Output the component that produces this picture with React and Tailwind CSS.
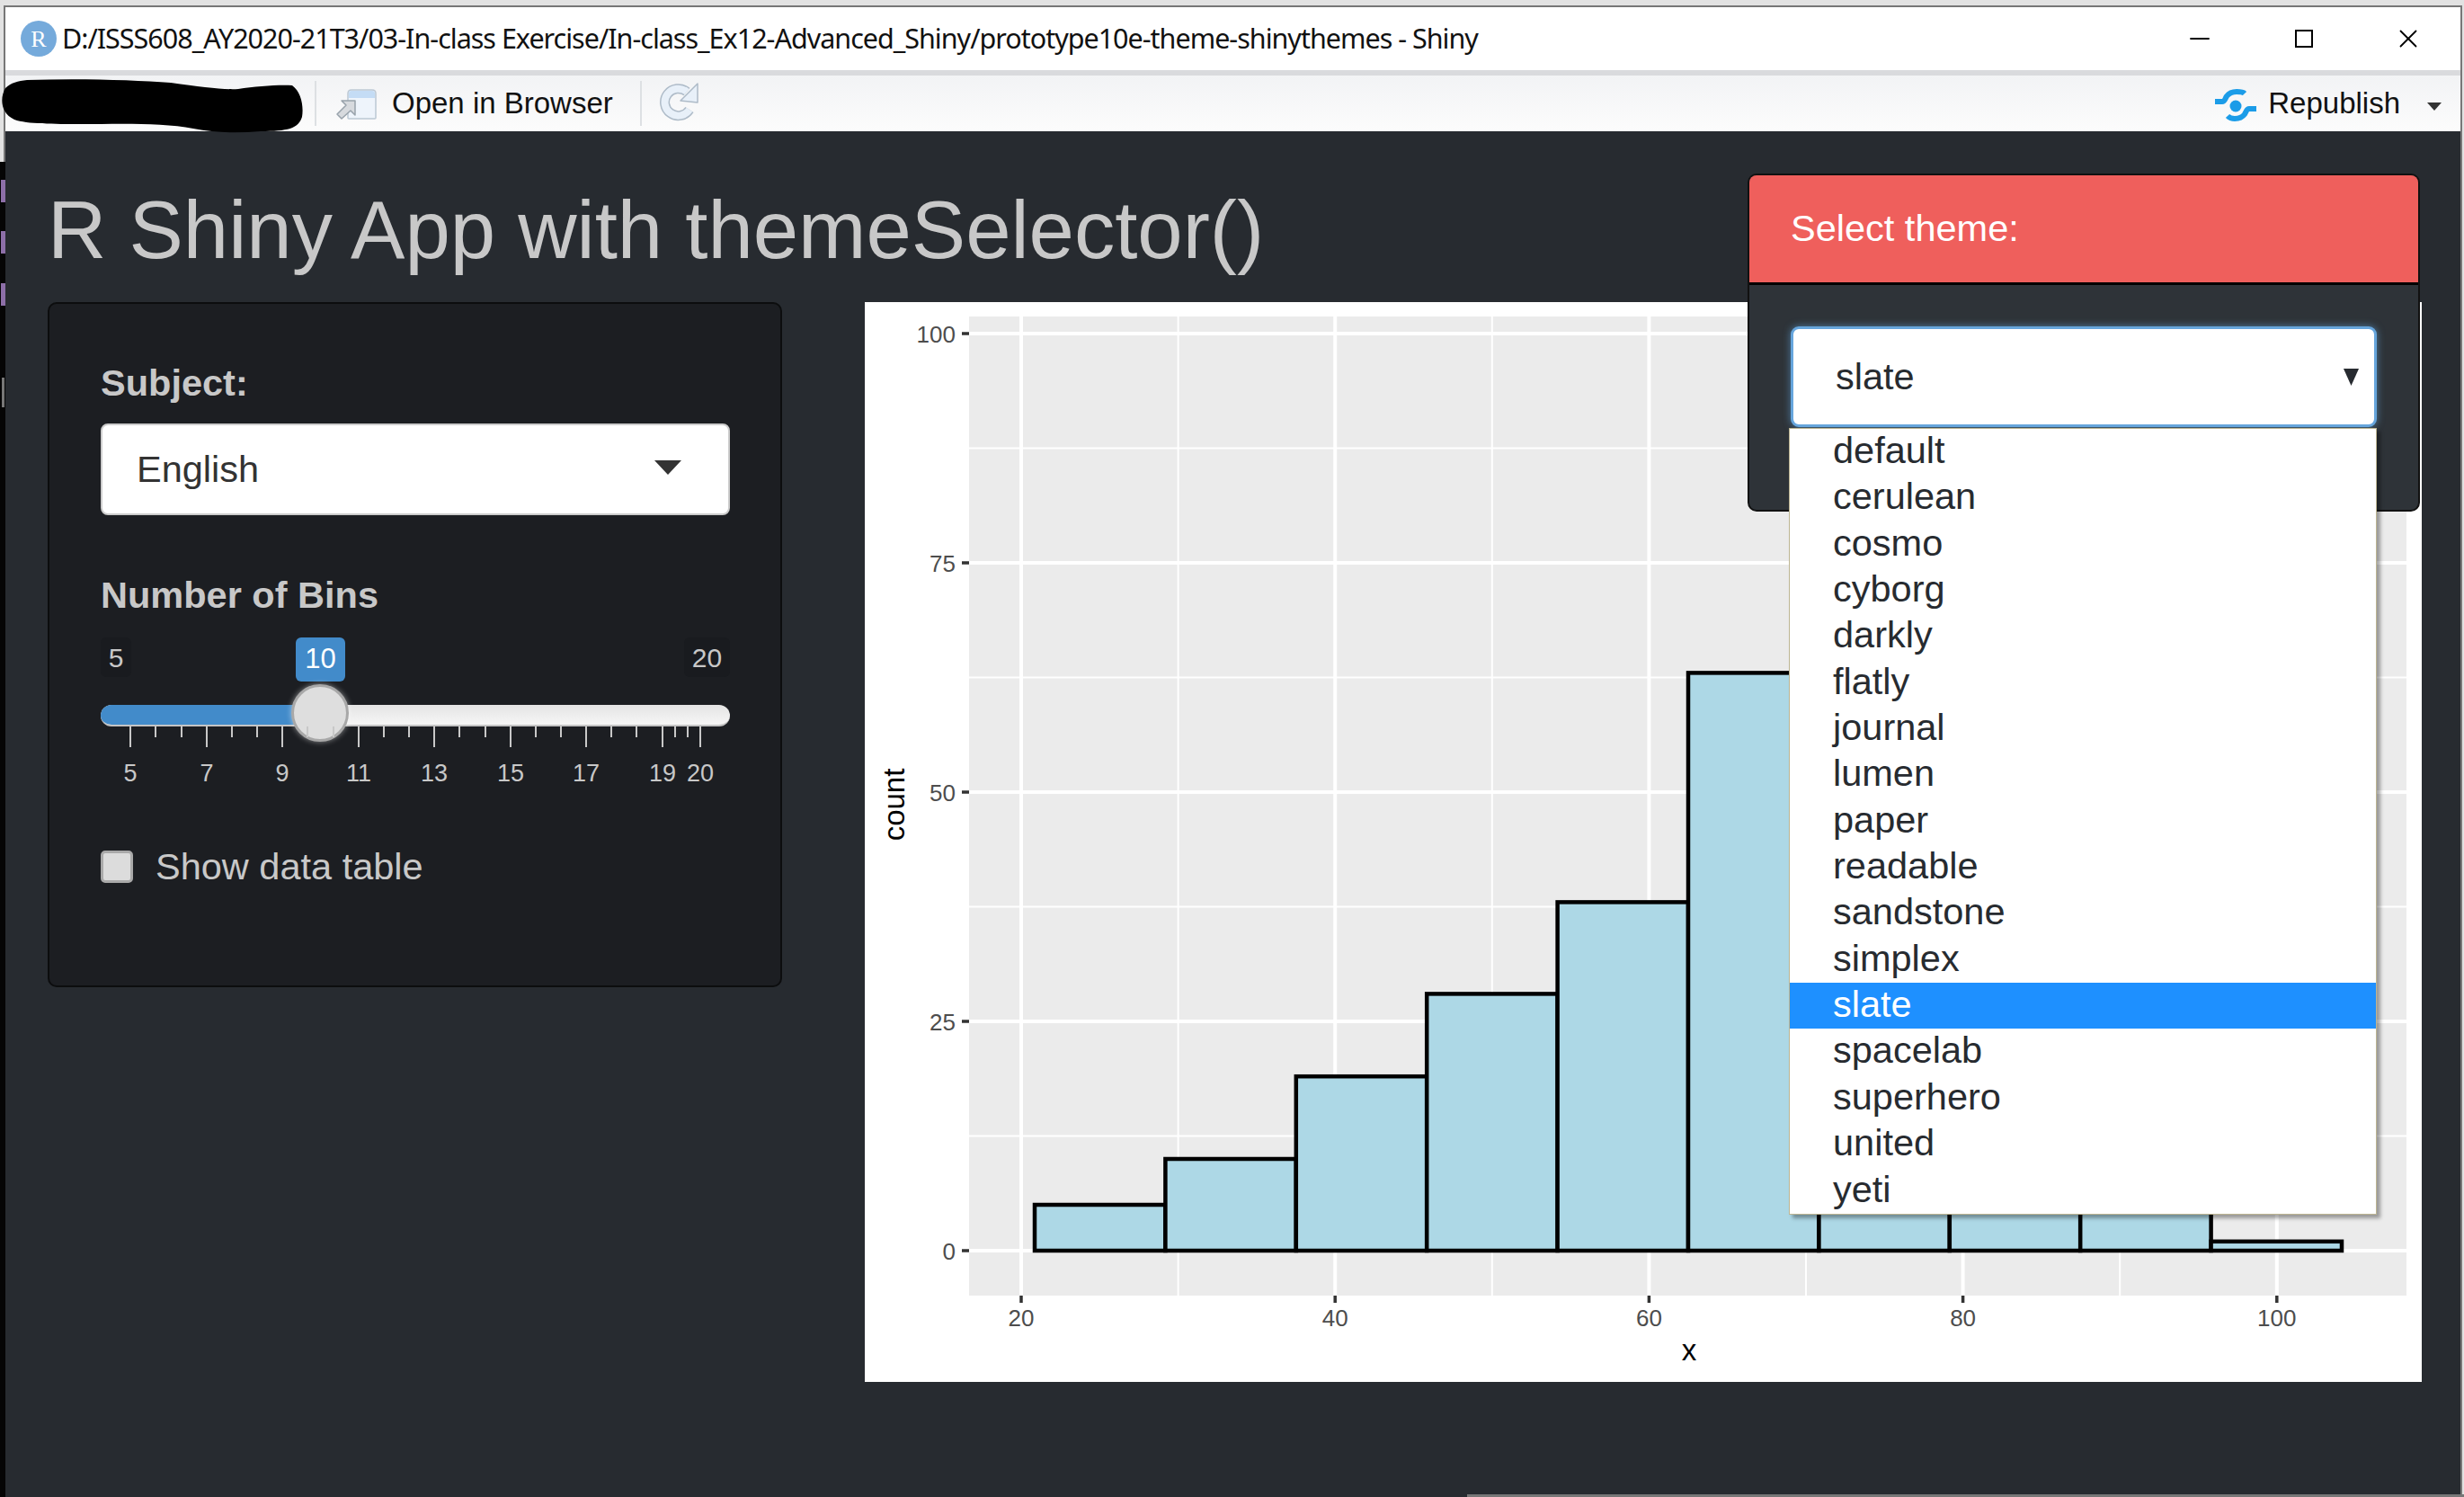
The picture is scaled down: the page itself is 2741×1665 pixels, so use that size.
import { Minus, X } from 'lucide-react';

const sans = 'font-["Liberation_Sans",Arial,sans-serif]';

const themes = ['default', 'cerulean', 'cosmo', 'cyborg', 'darkly', 'flatly', 'journal', 'lumen', 'paper', 'readable', 'sandstone', 'simplex', 'slate', 'spacelab', 'superhero', 'united', 'yeti'];
const bins = [5, 10, 19, 28, 38, 63, 80, 45, 25, 1];

const px = (v) => 174 + (v - 20) * 17.46;
const py = (c) => 1055 - c * 10.2;

const TitleBar = () => (
    <div className="flex items-center h-[70px] bg-white pl-[17px] pr-[41px]">
        <div className="w-[40px] h-[40px] rounded-full bg-[#75aadb] flex items-center justify-center text-white text-[26px] font-['Liberation_Serif',serif] shrink-0">R</div>
        <div className="ml-[6px] text-[30.5px] text-[#111] whitespace-nowrap font-['Noto_Sans',sans-serif] tracking-[-1px]">
            D:/ISSS608_AY2020-21T3/03-In-class Exercise/In-class_Ex12-Advanced_Shiny/prototype10e-theme-shinythemes - Shiny
        </div>
        <div className="ml-auto flex items-center gap-[82px]">
            <Minus size={34} strokeWidth={2} absoluteStrokeWidth className="text-black" />
            <div className="w-[34px] flex justify-center">
                <div className="w-[20px] h-[20px] border-2 border-black" />
            </div>
            <X size={34} strokeWidth={1.8} absoluteStrokeWidth className="text-black" />
        </div>
    </div>
);

const OpenIcon = () => (
    <svg width="62" height="62" viewBox="0 0 62 62">
        <path d="M27 20 Q27 16 31 16 H54 Q58 16 58 20 V47 Q58 48 57 48 H28 Q27 48 27 47 Z" fill="#eef4fb" stroke="#bcc8d4" strokeWidth="1.5" />
        <path d="M28 25 V20 Q28 17 31 17 H54 Q57 17 57 20 V25 Z" fill="#c4dcf5" />
        <path d="M35 28 V44 L30 39 L20 48 L15 43 L25 33 L20 28 Z" fill="#d7dade" stroke="#98a2ab" strokeWidth="1.5" strokeLinejoin="round" />
    </svg>
);

const RefreshIcon = () => (
    <svg width="62" height="62" viewBox="0 0 62 62" fill="none">
        <path d="M40 18 A15 15 0 1 0 43 38" stroke="#aebbc8" strokeWidth="11" />
        <path d="M40 18 A15 15 0 1 0 43 38" stroke="#e8f0f9" strokeWidth="8" />
        <path d="M52 9 V30 L33 28 Z" fill="#e8f0f9" stroke="#aebbc8" strokeWidth="1.5" strokeLinejoin="round" />
    </svg>
);

const PublishIcon = () => (
    <svg width="70" height="50" viewBox="0 0 70 50" fill="none">
        <circle cx="35" cy="28" r="6.5" fill="#1b9ce8" />
        <path d="M12 23 H20 C23 23 23 20 25 17 C28 13 33 12 36 12 C40 12 43 12 45 14" stroke="#1b9ce8" strokeWidth="6" />
        <path d="M58 31 H50 C47 31 47 34 45 37 C42 41 37 42 34 42 C30 42 28 41 26 39" stroke="#1b9ce8" strokeWidth="6" />
    </svg>
);

const Toolbar = () => (
    <div className={`relative flex items-center h-[62px] bg-gradient-to-b from-[#f2f3f5] to-[#fcfcfc] ${sans} text-[33px] text-[#111]`}>
        <svg className="absolute left-[-6px] top-[4px]" width="340" height="60" viewBox="0 0 340 60">
            <path d="M30 1 C90 -1 150 1 190 4 C225 9 250 12 265 11 C285 8 310 6 325 7 C335 14 338 30 336 42 C332 55 320 58 290 58 C265 60 240 60 215 55 C180 48 130 50 90 50 C60 50 30 50 16 45 C0 38 0 20 6 10 C12 4 20 2 30 1 Z" fill="#000" />
        </svg>
        <div className="w-[2px] h-[50px] bg-[#dde0e3] ml-[344px]" />
        <div className="ml-[8px]"><OpenIcon /></div>
        <span className="ml-[14px]">Open in Browser</span>
        <div className="w-[2px] h-[50px] bg-[#dde0e3] ml-[30px]" />
        <div className="ml-[10px]"><RefreshIcon /></div>
        <div className="ml-auto flex items-center pr-[21px]">
            <PublishIcon />
            <span className="ml-[1px]">Republish</span>
            <svg className="ml-[30px] mt-[6px]" width="16" height="9" viewBox="0 0 16 9"><path d="M0 0h16L8 9z" fill="#333" /></svg>
        </div>
    </div>
);

const SubjectSelect = () => (
    <div className="flex items-center justify-between w-[700px] h-[102px] bg-white border-[2px] border-[#ccc] rounded-[8px] pl-[38px] pr-[52px] text-[#333]">
        <span className="text-[41.5px]">English</span>
        <svg width="30" height="16" viewBox="0 0 30 16" className="mb-[4px]"><path d="M0 0h30L15 16z" fill="#333" /></svg>
    </div>
);

const majorTicks = [[5, 145], [7, 230], [9, 314], [11, 399], [13, 483], [15, 568], [17, 652], [19, 737], [20, 779]];
const minorTicks = [173, 202, 258, 286, 342, 371, 427, 455, 511, 540, 596, 624, 680, 708, 751, 765];

const Slider = () => (
    <div className="relative w-[700px] h-[175px] mt-[24px]">
        <span className="absolute left-0 top-0 w-[34px] h-[44px] rounded-[6px] bg-[#191b1f] text-[30px] text-[#c8c8c8] flex items-center justify-center">5</span>
        <span className="absolute right-0 top-0 w-[51px] h-[44px] rounded-[6px] bg-[#191b1f] text-[30px] text-[#c8c8c8] flex items-center justify-center">20</span>
        <span className="absolute left-[217px] top-0 w-[55px] h-[49px] rounded-[6px] bg-[#428bca] text-[31px] text-white flex items-center justify-center">10</span>
        <div className="absolute left-0 right-0 top-[75px] h-[24px] rounded-full bg-gradient-to-b from-[#e4e4e4] to-[#f6f6f6] border-b-[2px] border-[#c4c4c4] overflow-hidden">
            <div className="w-[244px] h-[24px] bg-[#428bca]" />
        </div>
        <div className="absolute left-[212px] top-[52px] w-[64px] h-[64px] rounded-full bg-[#dedede] border-[3px] border-[#a8a8a8] shadow-[0_0_6px_rgba(255,255,255,0.5)]" />
        {majorTicks.map(([label, x]) => (
            <div key={label}>
                <div className="absolute w-[2px] h-[23px] top-[99px] bg-[#c8c8c8]" style={{ left: x - 113 }} />
                <span className="absolute top-[135px] w-[60px] text-center text-[27px] leading-[32px] text-[#c8c8c8]" style={{ left: x - 142 }}>{label}</span>
            </div>
        ))}
        {minorTicks.map((x) => (
            <div key={x} className="absolute w-[2px] h-[12px] top-[99px] bg-[#c8c8c8]" style={{ left: x - 113 }} />
        ))}
    </div>
);

const Sidebar = () => (
    <div className={`w-[817px] h-[762px] shrink-0 bg-[#1c1e22] border-[2px] border-[#0c0d0e] rounded-[10px] pl-[57px] pt-[65px] ${sans} text-[#c8c8c8]`}>
        <div className="text-[41.5px] font-bold leading-[46px] mb-[22px]">Subject:</div>
        <SubjectSelect />
        <div className="text-[41.5px] font-bold leading-[46px] mt-[66px]">Number of Bins</div>
        <Slider />
        <div className="flex items-center mt-[57px]">
            <div className="w-[36px] h-[36px] rounded-[5px] bg-[#dcdcdc] border-[3px] border-[#a9a9a9]" />
            <span className="ml-[25px] text-[41.5px] leading-[46px]">Show data table</span>
        </div>
    </div>
);

const Histogram = () => (
    <svg className="shrink-0 bg-white" width="1732" height="1201" viewBox="0 0 1732 1201" fontFamily="Liberation Sans, Arial, sans-serif">
        <rect x="116" y="16" width="1599" height="1089" fill="#ebebeb" />
        {[12.5, 37.5, 62.5, 87.5].map((c) => <line key={c} x1="116" x2="1715" y1={py(c)} y2={py(c)} stroke="#fff" strokeWidth="2" />)}
        {[30, 50, 70, 90].map((v) => <line key={v} y1="16" y2="1105" x1={px(v)} x2={px(v)} stroke="#fff" strokeWidth="2" />)}
        {[0, 25, 50, 75, 100].map((c) => <line key={c} x1="116" x2="1715" y1={py(c)} y2={py(c)} stroke="#fff" strokeWidth="4" />)}
        {[20, 40, 60, 80, 100].map((v) => <line key={v} y1="16" y2="1105" x1={px(v)} x2={px(v)} stroke="#fff" strokeWidth="4" />)}
        {bins.map((c, i) => (
            <rect key={i} x={189 + i * 145.4} y={py(c)} width="145.4" height={c * 10.2} fill="#add8e6" stroke="#000" strokeWidth="4.5" />
        ))}
        {[0, 25, 50, 75, 100].map((c) => (
            <g key={c}>
                <line x1="108" x2="116" y1={py(c)} y2={py(c)} stroke="#333" strokeWidth="3.5" />
                <text x="101" y={py(c) + 9.5} textAnchor="end" fontSize="26" fill="#4d4d4d">{c}</text>
            </g>
        ))}
        {[20, 40, 60, 80, 100].map((v) => (
            <g key={v}>
                <line y1="1105" y2="1113" x1={px(v)} x2={px(v)} stroke="#333" strokeWidth="3.5" />
                <text x={px(v)} y="1139" textAnchor="middle" fontSize="26" fill="#4d4d4d">{v}</text>
            </g>
        ))}
        <text x="917" y="1177" textAnchor="middle" fontSize="33" fill="#000">x</text>
        <text transform="translate(44 559) rotate(-90)" textAnchor="middle" fontSize="33" fill="#000">count</text>
    </svg>
);

const ThemePanel = () => (
    <div className={`absolute left-[1944px] top-[193px] w-[748px] h-[376px] rounded-[10px] bg-[#2e3338] border-[2px] border-[#111] ${sans}`}>
        <div className="h-[122px] rounded-t-[8px] bg-[#ef5f5c] border-b-[3px] border-black pl-[46px] flex items-center text-white text-[41.5px]">Select theme:</div>
        <div className="absolute left-[46px] top-[168px] w-[652px] h-[112px] bg-white rounded-[9px] border-[3px] border-[#66a5dc] shadow-[0_0_9px_rgba(102,175,233,0.6)] flex items-center justify-between pl-[47px] pr-[17px] text-[#272b30]">
            <span className="text-[41.5px]">slate</span>
            <svg width="17" height="19" viewBox="0 0 17 19"><path d="M0 0h17L8.5 19z" fill="#272b30" /></svg>
        </div>
        <div className="absolute left-[44px] top-[281px] w-[654px] bg-white border border-[#bdb592] shadow-[4px_4px_4px_rgba(0,0,0,0.35)] text-[41.5px] text-[#272b30]">
            {themes.map((t) => (
                <div key={t} className={`h-[51.35px] leading-[48px] pl-[48px] ${t === 'slate' ? 'bg-[#1e90ff] text-white' : ''}`}>{t}</div>
            ))}
        </div>
    </div>
);

const App = () => {
    return (
        <div className="relative w-[2741px] h-[1665px] overflow-hidden bg-[#e2e2e2] pt-[6px]">
            <div className="h-full ml-[4px] mr-[2px] border-t-[2px] border-l-[2px] border-r-[2px] border-[#777] flex flex-col">
                <TitleBar />
                <div className="h-[6px] bg-[#d9dadd]" />
                <Toolbar />
                <main className={`flex-1 bg-[#272b30] pl-[47px] ${sans}`}>
                    <h1 className="text-[90.5px] leading-[100px] text-[#c8c8c8] pt-[60px] font-normal whitespace-nowrap">R Shiny App with themeSelector()</h1>
                    <div className="flex items-start gap-[92px] mt-[30px]">
                        <Sidebar />
                        <Histogram />
                    </div>
                </main>
            </div>
            {/* left edge: the window behind shows through as a dark strip with purple bits */}
            <div className="absolute left-0 top-[180px] bottom-0 w-[6px] bg-[#050505]" />
            <div className="absolute left-[1px] top-[200px] w-[5px] h-[25px] bg-[#8d6fa8]" />
            <div className="absolute left-[1px] top-[257px] w-[5px] h-[25px] bg-[#8d6fa8]" />
            <div className="absolute left-[1px] top-[315px] w-[5px] h-[25px] bg-[#8d6fa8]" />
            <div className="absolute left-[2px] top-[420px] w-[3px] h-[33px] bg-[#777]" />
            <div className="absolute left-[1632px] right-0 bottom-0 h-[3px] bg-[#777]" />
            <ThemePanel />
        </div>
    );
};

export default App;
